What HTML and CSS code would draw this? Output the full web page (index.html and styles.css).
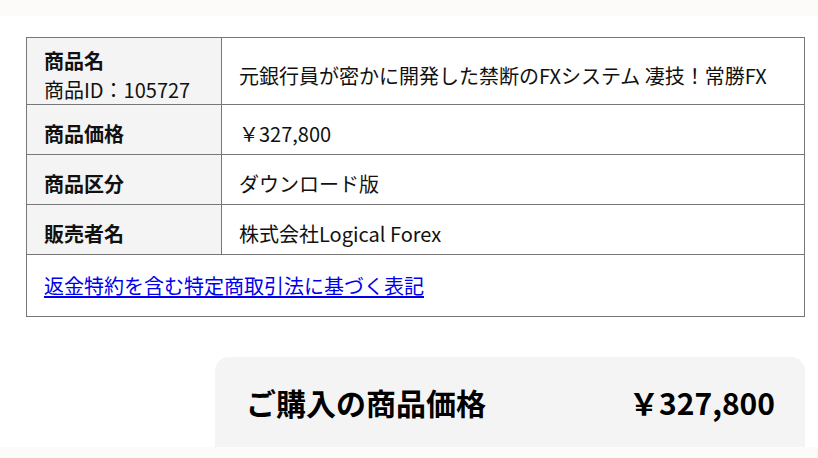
FILE: index.html
```html
<!DOCTYPE html>
<html lang="ja">
<head>
<meta charset="utf-8">
<title>商品情報</title>
<link rel="stylesheet" href="styles.css">
</head>
<body>
<div class="topbar"></div>
<main class="main">
  <table class="info">
    <tr class="row-name">
      <th class="label label-name"><span class="label-title">商品名</span><br><span class="label-id">商品ID：105727</span></th>
      <td class="value">元銀行員が密かに開発した禁断のFXシステム 凄技！常勝FX</td>
    </tr>
    <tr>
      <th class="label">商品価格</th>
      <td class="value">￥327,800</td>
    </tr>
    <tr>
      <th class="label">商品区分</th>
      <td class="value">ダウンロード版</td>
    </tr>
    <tr>
      <th class="label">販売者名</th>
      <td class="value">株式会社Logical Forex</td>
    </tr>
    <tr>
      <td class="link-cell" colspan="2"><a class="link" href="#">返金特約を含む特定商取引法に基づく表記</a></td>
    </tr>
  </table>
  <section class="summary">
    <div class="summary-row">
      <span class="summary-label">ご購入の商品価格</span>
      <span class="summary-price">￥327,800</span>
    </div>
  </section>
</main>
<div class="bottombar"></div>
</body>
</html>
```
FILE: styles.css
```css
html, body {
  margin: 0;
  padding: 0;
  background: #ffffff;
  font-family: "Noto Sans CJK JP", "Noto Sans", sans-serif;
  color: #111;
  overflow: hidden;
}
.topbar {
  height: 16px;
  background: #fcfbf9;
}
.main {
  padding: 21px 13px 0 26px;
}
.info {
  width: 779px;
  border-collapse: collapse;
  border: 1px solid #777;
  font-size: 20px;
  line-height: 29px;
}
.info th, .info td {
  border: 1px solid #777;
  text-align: left;
  vertical-align: middle;
  padding: 14px 17px 6px;
}
.info .label {
  width: 160px;
  background: #f4f4f4;
  font-weight: 700;
}
.info .label-name {
  padding-top: 8px;
  padding-bottom: 0;
}
.label-id {
  font-weight: 400;
}
.value {
  font-weight: 400;
}
.info .link-cell {
  padding: 16px 17px;
}
.link {
  color: #0000ee;
  text-decoration: underline;
  text-underline-offset: 2px;
}
.summary {
  margin: 40px 0 0 auto;
  width: 590px;
  height: 120px;
  background: #f4f4f4;
  border-radius: 14px 14px 0 0;
  box-sizing: border-box;
  padding: 24px 30px 0 31px;
}
.summary-row {
  display: flex;
  justify-content: space-between;
  align-items: center;
  font-size: 30px;
  font-weight: 700;
  line-height: 42px;
  color: #000;
}
.bottombar {
  position: fixed;
  left: 0;
  right: 0;
  bottom: 0;
  height: 11px;
  background: #fcfbf9;
}
```
